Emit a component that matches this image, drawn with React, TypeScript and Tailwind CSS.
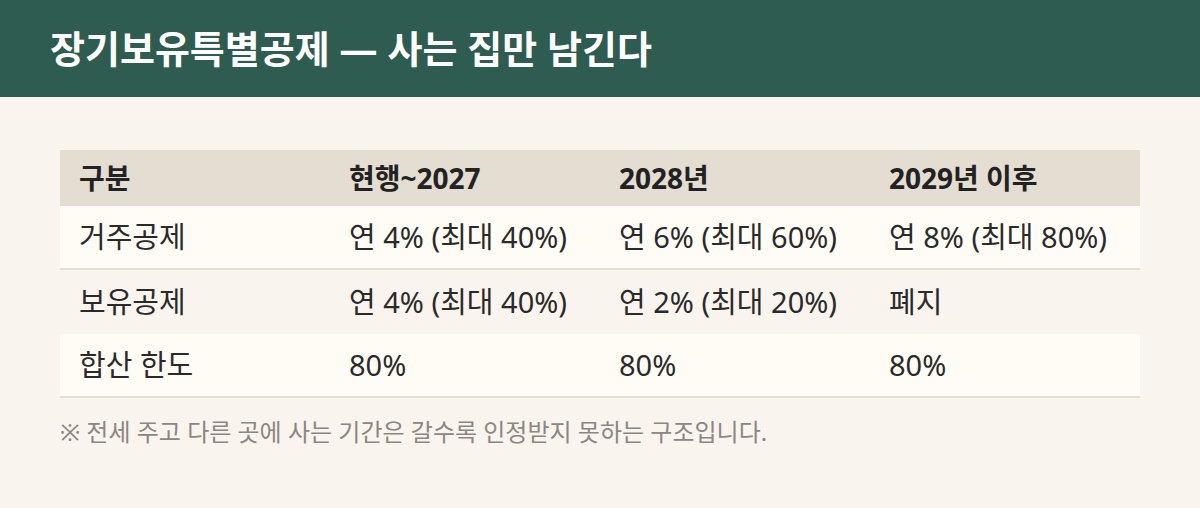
import React from 'react'

const rows = [
  { label: '거주공제', cells: ['연 4% (최대 40%)', '연 6% (최대 60%)', '연 8% (최대 80%)'], bg: 'bg-[#fffcf6]', line: true },
  { label: '보유공제', cells: ['연 4% (최대 40%)', '연 2% (최대 20%)', '폐지'], bg: 'bg-[#f9f5ee]', line: false },
  { label: '합산 한도', cells: ['80%', '80%', '80%'], bg: 'bg-[#fffcf6]', line: true },
]

const App = () => {
  return (
    <div className="w-[1200px] h-[508px] bg-[#f9f5ee] font-['Noto_Sans','Noto_Sans_CJK_KR',sans-serif]">
      <div className="h-[97px] bg-[#2e5c50] flex items-center px-[50px]">
        <h1 className="text-white text-[38px] font-bold">장기보유특별공제 — 사는 집만 남긴다</h1>
      </div>

      <div className="px-[60px] pt-[53px]">
        <div className="grid grid-cols-4 h-[56px] items-center bg-[#e3ddd2] text-[#222] text-[28px] font-bold">
          <div className="pl-[19px]">구분</div>
          <div className="pl-[19px]">현행~2027</div>
          <div className="pl-[19px]">2028년</div>
          <div className="pl-[19px]">2029년 이후</div>
        </div>
        {rows.map((r) => (
          <div
            key={r.label}
            className={`grid grid-cols-4 items-center h-[64px] text-[#2a2a2a] text-[29px] ${r.bg} ${r.line ? 'border-b-2 border-[#e3ddd2]' : ''}`}
          >
            <div className="pl-[19px]">{r.label}</div>
            {r.cells.map((c, j) => (
              <div key={j} className="pl-[19px]">{c}</div>
            ))}
          </div>
        ))}
        <p className="mt-[16px] text-[24px] text-[#8c8680]">※ 전세 주고 다른 곳에 사는 기간은 갈수록 인정받지 못하는 구조입니다.</p>
      </div>
    </div>
  )
}

export default App
